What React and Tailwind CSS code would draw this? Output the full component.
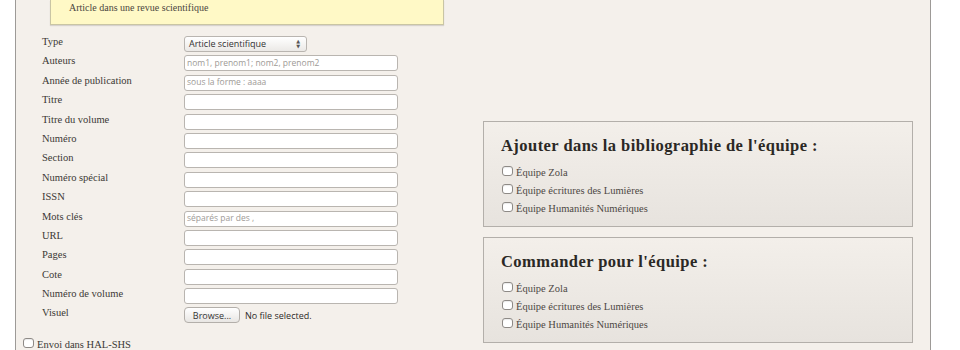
const fields = [
  { label: 'Auteurs', placeholder: 'nom1, prenom1; nom2, prenom2' },
  { label: 'Année de publication', placeholder: 'sous la forme : aaaa' },
  { label: 'Titre' },
  { label: 'Titre du volume' },
  { label: 'Numéro' },
  { label: 'Section' },
  { label: 'Numéro spécial' },
  { label: 'ISSN' },
  { label: 'Mots clés', placeholder: 'séparés par des ,' },
  { label: 'URL' },
  { label: 'Pages' },
  { label: 'Cote' },
  { label: 'Numéro de volume' },
];

const teams = ['Équipe Zola', 'Équipe écritures des Lumières', 'Équipe Humanités Numériques'];

const serif = "font-['Liberation_Serif',serif]";
const sans = "font-['Open_Sans','DejaVu_Sans',sans-serif]";

function Box() {
  return (
    <span className="mt-[1px] h-[10px] w-[11px] shrink-0 rounded-[3px] border border-[#8e8a86] bg-white shadow-[inset_0_1px_1px_rgba(0,0,0,0.08)]" />
  );
}

function Row({ label, children }) {
  return (
    <div className="flex h-[19.4px] items-start">
      <div className={`w-[142px] text-[10.5px] leading-[12px] text-[#3b3835] ${serif}`}>{label}</div>
      {children}
    </div>
  );
}

function TeamPanel({ title }) {
  return (
    <div className="h-[106px] w-[430px] border border-[#b3afaa] bg-gradient-to-b from-[#f3efea] to-[#e7e3de] pl-[17px] pt-[14px]">
      <h2 className={`text-[16.5px] font-bold leading-[20px] tracking-[0.45px] text-[#2b2825] ${serif}`}>{title}</h2>
      <div className="mt-[9px] flex flex-col">
        {teams.map((t) => (
          <div key={t} className="flex h-[18px] items-start gap-[3px] pl-[1px]">
            <Box />
            <span className={`pt-[2px] text-[10.5px] leading-[12px] text-[#4d4844] ${serif}`}>{t}</span>
          </div>
        ))}
      </div>
    </div>
  );
}

export default function App() {
  return (
    <div className="h-[350px] w-[960px] overflow-hidden bg-white">
      <div className="ml-[15px] flex h-full w-[916px] flex-col border-x border-[#9d9a97] bg-[#f4f0eb]">
        <div className="ml-[34px] h-[25px] w-[394px] shrink-0 border-x border-b border-[#c9c5a4] bg-[#fff9c6] pl-[18px] pt-[1px] shadow-[0_1px_1px_rgba(0,0,0,0.12)]">
          <span className={`block text-[10px] leading-[14px] text-[#4a4640] ${serif}`}>Article dans une revue scientifique</span>
        </div>

        <div className="flex">
          <div className="w-[467px] shrink-0">
            <div className="mt-[11px] pl-[26px]">
              <Row label="Type">
                <div className={`flex h-[16px] w-[123px] items-center justify-between rounded-[3px] border border-[#b9b5b0] bg-gradient-to-b from-white to-[#ebe9e6] pl-[4px] pr-[6px] text-[9px] text-[#333] ${sans}`}>
                  <span>Article scientifique</span>
                  <span className="flex flex-col items-center leading-none text-[#555]">
                    <span className="text-[5px]">▲</span>
                    <span className="text-[5px]">▼</span>
                  </span>
                </div>
              </Row>
              {fields.map((f) => (
                <Row key={f.label} label={f.label}>
                  <div className={`flex h-[16px] w-[214px] items-center rounded-[3px] border border-[#b9b5b0] bg-white pl-[2px] text-[8.5px] text-[#9e9a96] ${sans}`}>
                    {f.placeholder}
                  </div>
                </Row>
              ))}
              <Row label="Visuel">
                <div className="flex items-center gap-[5px]">
                  <div className={`flex h-[16px] w-[56px] items-center justify-center rounded-[4px] border border-[#b3afaa] bg-gradient-to-b from-white to-[#e8e6e3] text-[9px] text-[#333] ${sans}`}>
                    Browse...
                  </div>
                  <span className={`text-[9px] text-[#2c2a28] ${sans}`}>No file selected.</span>
                </div>
              </Row>
            </div>
            <div className="mt-[10px] flex items-start gap-[3px] pl-[7px]">
              <Box />
              <span className={`pt-[2px] text-[10.5px] leading-[12px] text-[#3b3835] ${serif}`}>Envoi dans HAL-SHS</span>
            </div>
          </div>

          <div className="mt-[96px] flex flex-col gap-[10px]">
            <TeamPanel title="Ajouter dans la bibliographie de l'équipe :" />
            <TeamPanel title="Commander pour l'équipe :" />
          </div>
        </div>
      </div>
    </div>
  );
}
